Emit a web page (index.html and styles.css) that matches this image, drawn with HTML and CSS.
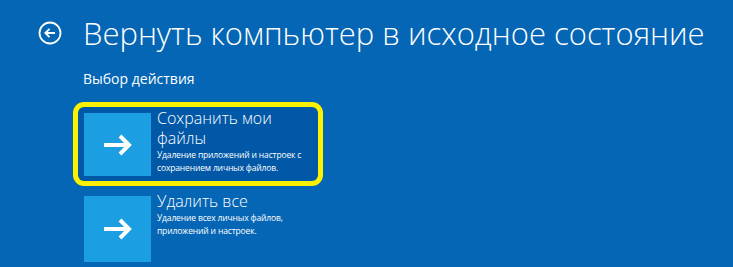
FILE: index.html
```html
<!DOCTYPE html>
<html lang="ru">
<head>
  <meta charset="UTF-8">
  <title>Вернуть компьютер в исходное состояние</title>
  <meta name="viewport" content="width=device-width, initial-scale=1.0">
  <link rel="stylesheet" href="styles.css">
</head>
<body>

  <div class="page">
    <div class="head">
      <button class="back" type="button" aria-label="Назад">
        <svg width="24" height="24" viewBox="0 0 24 24">
          <circle cx="12" cy="12" r="10.5" fill="none" stroke="#fff" stroke-width="1.8"/>
          <path d="M17 12H7.5M11.5 7.8L7.3 12l4.2 4.2" fill="none" stroke="#fff" stroke-width="1.8"/>
        </svg>
      </button>
      <h1>Вернуть компьютер в исходное состояние</h1>
    </div>

    <p class="subtitle">Выбор действия</p>

    <div class="options">
      <div class="option selected">
        <span class="tile">
          <svg width="32" height="22" viewBox="0 0 32 22">
            <path d="M2 11h26M18 2l9 9-9 9" fill="none" stroke="#fff" stroke-width="4"/>
          </svg>
        </span>
        <div class="text">
          <h2>Сохранить мои<br>файлы</h2>
          <p>Удаление приложений и настроек с<br>сохранением личных файлов.</p>
        </div>
      </div>

      <div class="option">
        <span class="tile">
          <svg width="32" height="22" viewBox="0 0 32 22">
            <path d="M2 11h26M18 2l9 9-9 9" fill="none" stroke="#fff" stroke-width="4"/>
          </svg>
        </span>
        <div class="text">
          <h2>Удалить все</h2>
          <p>Удаление всех личных файлов,<br>приложений и настроек.</p>
        </div>
      </div>
    </div>
  </div>

</body>
</html>
```

FILE: styles.css
```css
* {
  box-sizing: border-box;
}

body {
  margin: 0;
  background: #0466b5;
  color: #fff;
  font-family: "Open Sans", "Noto Sans", Arial, sans-serif;
}

.page {
  width: 733px;
  height: 267px;
  overflow: hidden;
  padding: 12px 0 0 38px;
}

.head {
  display: flex;
  align-items: center;
  gap: 21px;
}

.back {
  width: 24px;
  height: 24px;
  padding: 0;
  border: none;
  background: none;
  cursor: pointer;
}

.back svg {
  display: block;
}

h1 {
  margin: 0;
  font-size: 31px;
  font-weight: 300;
  line-height: 42px;
  white-space: nowrap;
}

.subtitle {
  margin: 16px 0 0 45px;
  font-size: 14px;
  line-height: 18px;
}

.options {
  margin: 19px 0 0 40px;
  width: 240px;
  display: flex;
  flex-direction: column;
  gap: 9px;
}

.option {
  display: flex;
  gap: 6px;
  padding: 6px 6px 5px;
  border-radius: 6px;
}

.option.selected {
  background: #0058a7;
  box-shadow: 0 0 0 5px #fcf200;
}

.tile {
  flex: none;
  width: 67px;
  height: 66px;
  background: #1c9fe2;
  display: flex;
  align-items: center;
  justify-content: center;
}

.selected .tile {
  height: 63px;
}

.text h2 {
  margin: -5px 0 0;
  font-size: 16px;
  font-weight: 300;
  line-height: 20px;
}

.text p {
  margin: 0;
  font-size: 8.5px;
  letter-spacing: -0.15px;
  line-height: 13px;
  white-space: nowrap;
}
```
